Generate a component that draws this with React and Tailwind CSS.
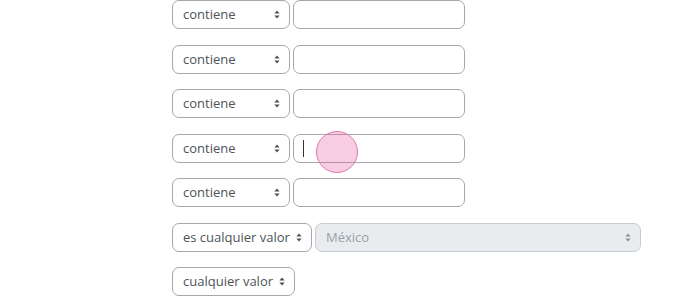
import React from "react";

function Arrows({ color }) {
  return (
    <svg width="6" height="9" viewBox="0 0 6 9" className="shrink-0">
      <path d="M3 0.5 L5.6 3.6 L0.4 3.6 Z" fill={color} />
      <path d="M3 8.5 L5.6 5.4 L0.4 5.4 Z" fill={color} />
    </svg>
  );
}

function Select({ label, width, disabled }) {
  return (
    <div
      className={`h-[29px] rounded-[7px] border flex items-center justify-between pl-[10px] pr-[9px] shrink-0 ${
        disabled ? "bg-[#e9ecef] border-[#c8ccd0] text-[#9aa0a6]" : "bg-white border-[#a3a8ae] text-[#4d5359]"
      }`}
      style={{ width }}
    >
      <span className="text-[13px] leading-none">{label}</span>
      <Arrows color={disabled ? "#8a9096" : "#495057"} />
    </div>
  );
}

function Input({ children }) {
  return (
    <div className="h-[29px] w-[172px] rounded-[7px] border border-[#a3a8ae] bg-white shrink-0 relative flex items-center">
      {children}
    </div>
  );
}

export default function App() {
  return (
    <div
      className="w-[680px] h-[299px] bg-white overflow-hidden relative"
      style={{ fontFamily: "'Open Sans', 'Liberation Sans', sans-serif" }}
    >
      <div className="flex flex-col gap-[15.5px] pl-[172px] pt-0">
        {[0, 1, 2, 3, 4].map((i) => (
          <div key={i} className="flex gap-[3px] items-center">
            <Select label="contiene" width={118} />
            <Input>
              {i === 3 && <div className="ml-[9px] w-px h-[17px] bg-[#333]" />}
            </Input>
          </div>
        ))}
        <div className="flex gap-[3px] items-center">
          <Select label="es cualquier valor" width={140} />
          <Select label="México" width={326} disabled />
        </div>
        <div className="flex">
          <Select label="cualquier valor" width={123} />
        </div>
      </div>
      <div className="absolute left-[316px] top-[131px] w-[42px] h-[42px] rounded-full bg-[rgba(232,90,160,0.3)] border-[1.5px] border-[#e07ab0]" />
    </div>
  );
}
